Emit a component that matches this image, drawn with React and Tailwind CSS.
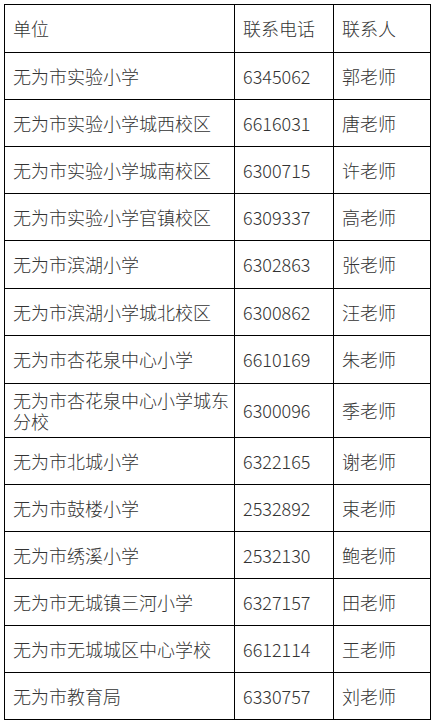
import React from "react";

const rows = [
  ["无为市实验小学", "6345062", "郭老师", "h-[47px]"],
  ["无为市实验小学城西校区", "6616031", "唐老师", "h-[47px]"],
  ["无为市实验小学城南校区", "6300715", "许老师", "h-[47px]"],
  ["无为市实验小学官镇校区", "6309337", "高老师", "h-[47px]"],
  ["无为市滨湖小学", "6302863", "张老师", "h-[48px]"],
  ["无为市滨湖小学城北校区", "6300862", "汪老师", "h-[47px]"],
  ["无为市杏花泉中心小学", "6610169", "朱老师", "h-[48px]"],
  ["无为市杏花泉中心小学城东分校", "6300096", "季老师", "h-[54px]"],
  ["无为市北城小学", "6322165", "谢老师", "h-[47px]"],
  ["无为市鼓楼小学", "2532892", "束老师", "h-[47px]"],
  ["无为市绣溪小学", "2532130", "鲍老师", "h-[47px]"],
  ["无为市无城镇三河小学", "6327157", "田老师", "h-[47px]"],
  ["无为市无城城区中心学校", "6612114", "王老师", "h-[47px]"],
  ["无为市教育局", "6330757", "刘老师", "h-[47px]"],
];

function Row({ a, b, c, h }) {
  return (
    <div className={`flex ${h}`}>
      <div className="w-[230px] shrink-0 border-r border-b border-black flex items-center pl-[8px] pr-[3px] leading-[21px]">
        {a}
      </div>
      <div className="w-[99px] shrink-0 border-r border-b border-black flex items-center pl-[8px]">
        {b}
      </div>
      <div className="w-[97px] shrink-0 border-r border-b border-black flex items-center pl-[8px]">
        {c}
      </div>
    </div>
  );
}

export default function App() {
  return (
    <div className="w-[435px] h-[726px] bg-white pt-[4px] pl-[4px]">
      <div
        className="w-[427px] border-l border-t border-black text-[18px] font-light text-[#333333]"
        style={{ fontFamily: '"Noto Sans CJK SC", "Noto Sans", sans-serif' }}
      >
        <Row a="单位" b="联系电话" c="联系人" h="h-[48px]" />
        {rows.map((r, i) => (
          <Row key={i} a={r[0]} b={r[1]} c={r[2]} h={r[3]} />
        ))}
      </div>
    </div>
  );
}
